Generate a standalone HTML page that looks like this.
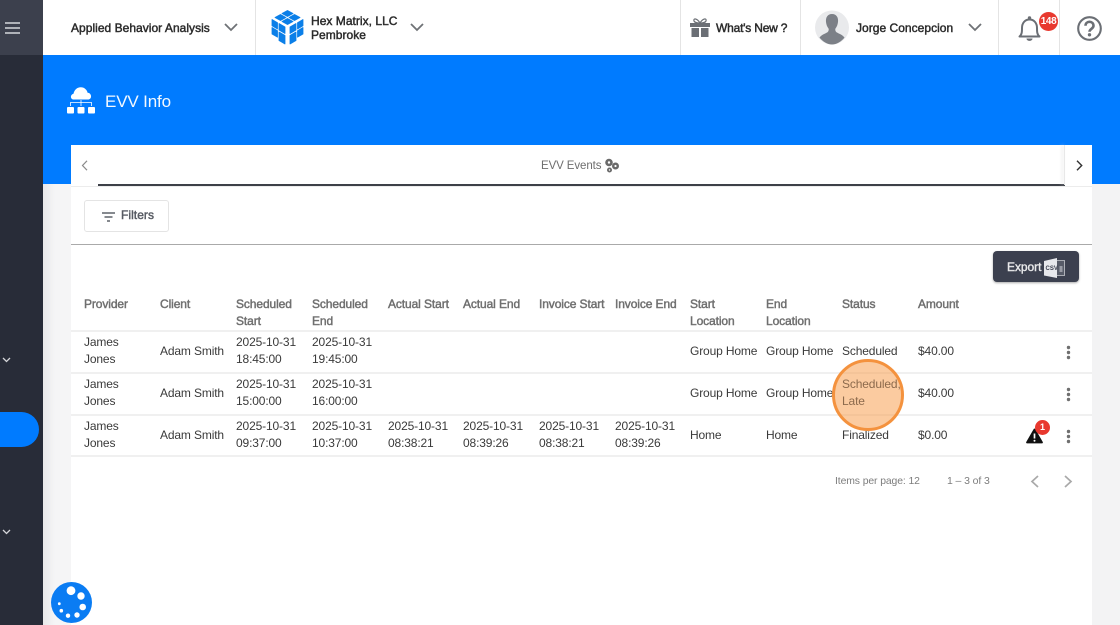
<!DOCTYPE html>
<html><head><meta charset="utf-8"><style>
html,body{margin:0;padding:0}
body{width:1120px;height:625px;overflow:hidden;position:relative;background:#f3f3f4;font-family:"Liberation Sans",sans-serif;color:#333}
.a{position:absolute}
.t{position:absolute;white-space:nowrap;font-size:12px;line-height:17px;letter-spacing:-.14px;color:#3a3a3a}
.h{position:absolute;white-space:nowrap;font-size:12px;line-height:17px;letter-spacing:-.1px;color:#6f6f6f;-webkit-text-stroke:.45px #6f6f6f}
.n{position:absolute;white-space:nowrap;font-size:12px;line-height:15px;letter-spacing:.03px;color:#2b2b2b;-webkit-text-stroke:.45px #2b2b2b}
.l{position:absolute;left:71px;width:1021px;height:2px;background:#f0f0f0}
.v{position:absolute;top:0;width:1px;height:55px;background:#e4e4e4}
svg{position:absolute;overflow:visible}
</style></head><body>

<div class="a" style="left:0;top:0;width:43px;height:625px;background:#282c38"></div>
<div class="a" style="left:0;top:0;width:43px;height:55px;background:#3c404d"></div>
<svg style="left:5px;top:22px" width="15" height="12"><path d="M0 1h15M0 6h15M0 11h15" stroke="#d5d7db" stroke-width="1.4"/></svg>
<svg style="left:2px;top:357px" width="9" height="6"><path d="M1 1l3.5 3.5L8 1" stroke="#d5d6da" stroke-width="1.3" fill="none"/></svg>
<svg style="left:2px;top:529px" width="9" height="6"><path d="M1 1l3.5 3.5L8 1" stroke="#d5d6da" stroke-width="1.3" fill="none"/></svg>
<div class="a" style="left:0;top:412px;width:39px;height:35px;background:#007bff;border-radius:0 18px 18px 0"></div>

<div class="a" style="left:43px;top:0;width:1077px;height:55px;background:#fff"></div>
<div class="a" style="left:43px;top:55px;width:1077px;height:129px;background:#007bff"></div>
<div class="a" style="left:43px;top:184px;width:28px;height:441px;background:linear-gradient(90deg,#e9e9ea,#f5f5f6 12px)"></div>

<div class="n" style="left:71px;top:20.5px">Applied Behavior Analysis</div>
<svg style="left:224px;top:23px" width="14" height="9"><path d="M1 1l6 6 6-6" stroke="#6f7276" stroke-width="1.8" fill="none"/></svg>
<div class="v" style="left:255px"></div>

<svg style="left:271px;top:10px" width="33" height="35" viewBox="0 0 33 35"><g fill="#0b7fe8" stroke="#0b7fe8" stroke-width=".8" stroke-linejoin="round"><path d="M16.5 0.5l5.5 3-5.5 3-5.5-3z"/><path d="M9.5 4.5l5.5 3-5.5 3-5.500-3z"/><path d="M23.500 4.500l5.500 3-5.500 3-5.500-3z"/><path d="M16.500 8.500l5.500 3-5.500 3-5.500-3z"/><path d="M1 9.500l5.500 3.200V19L1 15.800z"/><path d="M8 13.500l6 3.500v6.500l-6-3.500z"/><path d="M32 9.500l-5.500 3.200V19L32 15.800z"/><path d="M25 13.500l-6 3.500v6.500l6-3.500z"/><path d="M1 17.500l5.500 3.200v6.500L1 24z"/><path d="M8 22l6 3.500V34l-6-3.500z"/><path d="M32 17.500l-5.500 3.200v6.500L32 24z"/><path d="M25 22l-6 3.500V34l6-3.500z"/></g></svg>
<div class="n" style="left:311px;top:13.500px;line-height:14.500px">Hex Matrix, LLC<br>Pembroke</div>
<svg style="left:410px;top:23px" width="14" height="9"><path d="M1 1l6 6 6-6" stroke="#6f7276" stroke-width="1.8" fill="none"/></svg>

<div class="v" style="left:680px"></div>
<svg style="left:690px;top:18px" width="20" height="20" viewBox="0 0 20 20"><path d="M0 5h20v4H0zM1.500 10h7.500v9H1.500zM11 10h7.500v9H11z" fill="#6b6f75"/><path d="M10 5C7 0 3 0 4 3c.5 1.500 4 2 6 2zm0 0c3-5 7-5 6-2-.5 1.500-4 2-6 2z" fill="none" stroke="#6b6f75" stroke-width="1.200"/></svg>
<div class="n" style="left:716px;top:20.500px;letter-spacing:-.2px">What's New ?</div>
<div class="v" style="left:800px"></div>
<svg style="left:815px;top:10px" width="34" height="35" viewBox="0 0 34 35"><circle cx="17" cy="17.500" r="17" fill="#e9eaec"/><path d="M17 4c4.500 0 6.500 3.500 6 8-.3 2.500-1 4.500-2.500 6.500-.6 1 0 3 1 3.700 2.500 1.500 6 2.500 8 5.300-3 4-8 7-12.500 7S7.500 31.500 4.500 27.500c2-2.800 5.500-3.800 8-5.300 1-.7 1.600-2.700 1-3.700C12 16.500 11.300 14.500 11 12c-.5-4.500 1.500-8 6-8z" fill="#7c8087"/></svg>
<div class="n" style="left:856px;top:20.500px">Jorge Concepcion</div>
<svg style="left:968px;top:23px" width="14" height="9"><path d="M1 1l6 6 6-6" stroke="#6f7276" stroke-width="1.8" fill="none"/></svg>
<div class="v" style="left:998px"></div>
<svg style="left:1018px;top:16px" width="23" height="26" viewBox="0 0 23 26"><path d="M1.500 20.500c2.500-2 2.500-5 2.500-8.500 0-5 3-8.500 7.500-8.500S19 7 19 12c0 3.500 0 6.500 2.500 8.500z" fill="none" stroke="#6b6f75" stroke-width="2" stroke-linejoin="round"/><path d="M8.500 22.500h6c0 3.200-6 3.200-6 0z" fill="#6b6f75"/><circle cx="11.500" cy="2" r="1.700" fill="#6b6f75"/></svg>
<div class="a" style="left:1039px;top:12px;width:19px;height:19px;border-radius:50%;background:#e8392f;color:#fff;font-size:10px;font-weight:bold;line-height:19px;text-align:center;letter-spacing:-.4px">148</div>
<div class="v" style="left:1059px"></div>
<svg style="left:1077px;top:16px" width="25" height="25" viewBox="0 0 25 25"><circle cx="12.500" cy="12.500" r="11.300" fill="none" stroke="#6b6f75" stroke-width="2.100"/><path d="M8.500 9.800c0-5.300 8-5.300 8 0 0 3-4 3-4 6" fill="none" stroke="#6b6f75" stroke-width="2.600"/><circle cx="12.500" cy="18.800" r="1.700" fill="#6b6f75"/></svg>

<svg style="left:67px;top:87px" width="28" height="27" viewBox="0 0 28 27"><g fill="#fff"><path d="M7 12.500c-4 0-4-5-.5-5.800C7.300 3 10 .3 13.800 .3c3.500 0 6 2.400 6.800 5.400 4.200 0 5 6.800.2 6.800z"/><rect x="0" y="20" width="7" height="6.500" rx="1"/><rect x="10.500" y="20" width="7" height="6.500" rx="1"/><rect x="21" y="20" width="7" height="6.500" rx="1"/></g><path d="M3.500 19v-3.500h21V19M14 13v6" fill="none" stroke="#fff" stroke-width=".8"/></svg>
<div class="a" style="left:105px;top:91px;font-size:17px;line-height:21px;color:#f2f8ff;white-space:nowrap;letter-spacing:-.15px">EVV Info</div>

<div class="a" style="left:71px;top:145px;width:1021px;height:480px;background:#fff"></div>
<div class="a" style="left:98px;top:184px;width:967px;height:2px;background:#3d4048"></div>
<div class="a" style="left:71px;top:186px;width:1021px;height:1px;background:#ececec"></div>
<div class="a" style="left:1064px;top:145px;width:1px;height:40px;background:#e8e8e8;box-shadow:-2px 0 3px #ddd"></div>
<svg style="left:81px;top:160px" width="7" height="11"><path d="M6 .8L1.500 5.500 6 10.200" stroke="#8a8a8a" stroke-width="1.200" fill="none"/></svg>
<svg style="left:1076px;top:160px" width="7" height="11"><path d="M1 .8l4.700 4.700L1 10.200" stroke="#333" stroke-width="1.400" fill="none"/></svg>
<div class="a" style="left:541px;top:158px;font-size:11.500px;line-height:17px;color:#6e6e6e;white-space:nowrap;letter-spacing:-.1px">EVV Events</div>
<svg style="left:604px;top:158px" width="16" height="15" viewBox="0 0 16 15"><g fill="none" stroke="#6a6a6a"><circle cx="5" cy="4.500" r="2.500" stroke-width="2.600"/><circle cx="11.500" cy="8" r="2.300" stroke-width="2.400"/><circle cx="5.500" cy="12" r="1.600" stroke-width="1.800"/></g></svg>

<div class="a" style="left:84px;top:200px;width:83px;height:30px;border:1px solid #e4e4e4;border-radius:3px"></div>
<svg style="left:102px;top:212px" width="13" height="10"><path d="M0 1h13M2.500 5h8M5 9h3" stroke="#3f434c" stroke-width="1.300"/></svg>
<div class="a" style="left:121px;top:207px;font-size:12px;line-height:16px;color:#575b63;-webkit-text-stroke:.45px #575b63;white-space:nowrap;letter-spacing:.05px">Filters</div>
<div class="a" style="left:71px;top:244px;width:1021px;height:1px;background:#aaa"></div>

<div class="a" style="left:993px;top:251px;width:86px;height:31px;background:#3c404f;border-radius:4px;box-shadow:0 1px 2px #aaa"></div>
<div class="a" style="left:1007px;top:259px;font-size:12px;line-height:16px;color:#e8e8ea;-webkit-text-stroke:.4px #e8e8ea;white-space:nowrap;letter-spacing:-.05px">Export</div>
<svg style="left:1044px;top:258px" width="21" height="20" viewBox="0 0 21 20"><path d="M12 2.500h8.500v15H12z" fill="#575b68" stroke="#c9cad0" stroke-width=".8"/><path d="M0 3l13-3v20L0 17.500z" fill="#e7e8ec"/><text x="1.500" y="12" font-family="Liberation Sans" font-size="6" font-weight="bold" fill="#3c404f">CSV</text><path d="M15.500 8h3v6h-3z" fill="#9a9ca6"/></svg>

<div class="h" style="left:84px;top:295.500px">Provider</div>
<div class="h" style="left:160px;top:295.500px">Client</div>
<div class="h" style="left:236px;top:295.500px">Scheduled<br>Start</div>
<div class="h" style="left:312px;top:295.500px">Scheduled<br>End</div>
<div class="h" style="left:388px;top:295.500px">Actual Start</div>
<div class="h" style="left:463px;top:295.500px">Actual End</div>
<div class="h" style="left:539px;top:295.500px">Invoice Start</div>
<div class="h" style="left:615px;top:295.500px">Invoice End</div>
<div class="h" style="left:690px;top:295.500px">Start<br>Location</div>
<div class="h" style="left:766px;top:295.500px">End<br>Location</div>
<div class="h" style="left:842px;top:295.500px">Status</div>
<div class="h" style="left:918px;top:295.500px">Amount</div>

<div class="l" style="top:330px"></div>
<div class="l" style="top:372px"></div>
<div class="l" style="top:414px"></div>
<div class="l" style="top:455px"></div>

<div class="t" style="left:84px;top:334px">James<br>Jones</div>
<div class="t" style="left:160px;top:343px">Adam Smith</div>
<div class="t" style="left:236px;top:334px">2025-10-31<br>18:45:00</div>
<div class="t" style="left:312px;top:334px">2025-10-31<br>19:45:00</div>
<div class="t" style="left:690px;top:343px">Group Home</div>
<div class="t" style="left:766px;top:343px">Group Home</div>
<div class="t" style="left:842px;top:343px">Scheduled</div>
<div class="t" style="left:918px;top:343px">$40.00</div>

<div class="t" style="left:84px;top:376px">James<br>Jones</div>
<div class="t" style="left:160px;top:385px">Adam Smith</div>
<div class="t" style="left:236px;top:376px">2025-10-31<br>15:00:00</div>
<div class="t" style="left:312px;top:376px">2025-10-31<br>16:00:00</div>
<div class="t" style="left:690px;top:385px">Group Home</div>
<div class="t" style="left:766px;top:385px">Group Home</div>
<div class="t" style="left:918px;top:385px">$40.00</div>

<div class="t" style="left:84px;top:418px">James<br>Jones</div>
<div class="t" style="left:160px;top:427px">Adam Smith</div>
<div class="t" style="left:236px;top:418px">2025-10-31<br>09:37:00</div>
<div class="t" style="left:312px;top:418px">2025-10-31<br>10:37:00</div>
<div class="t" style="left:388px;top:418px">2025-10-31<br>08:38:21</div>
<div class="t" style="left:463px;top:418px">2025-10-31<br>08:39:26</div>
<div class="t" style="left:539px;top:418px">2025-10-31<br>08:38:21</div>
<div class="t" style="left:615px;top:418px">2025-10-31<br>08:39:26</div>
<div class="t" style="left:690px;top:427px">Home</div>
<div class="t" style="left:766px;top:427px">Home</div>
<div class="t" style="left:842px;top:427px">Finalized</div>
<div class="t" style="left:918px;top:427px">$0.00</div>

<svg style="left:1066px;top:345px" width="5" height="15"><g fill="#6f6f6f"><circle cx="2.500" cy="2.500" r="1.700"/><circle cx="2.500" cy="7.500" r="1.700"/><circle cx="2.500" cy="12.500" r="1.700"/></g></svg>
<svg style="left:1066px;top:387px" width="5" height="15"><g fill="#6f6f6f"><circle cx="2.500" cy="2.500" r="1.700"/><circle cx="2.500" cy="7.500" r="1.700"/><circle cx="2.500" cy="12.500" r="1.700"/></g></svg>
<svg style="left:1066px;top:429px" width="5" height="15"><g fill="#6f6f6f"><circle cx="2.500" cy="2.500" r="1.700"/><circle cx="2.500" cy="7.500" r="1.700"/><circle cx="2.500" cy="12.500" r="1.700"/></g></svg>

<svg style="left:1026px;top:428px" width="17" height="16" viewBox="0 0 17 16"><path d="M8.500 1.500L16 14.500H1z" fill="#111" stroke="#111" stroke-width="1.800" stroke-linejoin="round"/><path d="M8.500 5.500v5" stroke="#fff" stroke-width="1.700"/><circle cx="8.500" cy="12.800" r="1" fill="#fff"/></svg>
<div class="a" style="left:1035px;top:420px;width:15px;height:15px;border-radius:50%;background:#e8392f;color:#fff;font-size:9px;font-weight:bold;line-height:15px;text-align:center">1</div>

<div class="a" style="left:835px;top:473.500px;font-size:10.400px;line-height:15px;color:#7d7d7d;white-space:nowrap;letter-spacing:-.1px">Items per page: 12</div>
<div class="a" style="left:947px;top:473.500px;font-size:10.500px;line-height:15px;color:#7d7d7d;white-space:nowrap;letter-spacing:-.1px">1 – 3 of 3</div>
<svg style="left:1030px;top:475px" width="9" height="13"><path d="M8 1L2 6.500 8 12" stroke="#a9a9a9" stroke-width="1.700" fill="none"/></svg>
<svg style="left:1064px;top:475px" width="9" height="13"><path d="M1 1l6 5.500L1 12" stroke="#a9a9a9" stroke-width="1.700" fill="none"/></svg>

<div class="a" style="left:832px;top:359px;width:72px;height:72px;box-sizing:border-box;border-radius:50%;background:rgba(248,151,66,.5);border:3px solid #f4923e"></div>
<div class="t" style="left:842px;top:376px;color:#8c6a4c">Scheduled,<br>Late</div>

<svg style="left:51px;top:582px" width="41" height="41" viewBox="0 0 41 41"><circle cx="20.500" cy="20.500" r="20.500" fill="#0a7cf3"/><g fill="#fff"><circle cx="20" cy="8.700" r="4.400"/><circle cx="30" cy="14" r="3.700"/><circle cx="31.700" cy="25" r="3.300"/><circle cx="26" cy="33" r="2.700"/><circle cx="17" cy="33.700" r="2.200"/><circle cx="10.300" cy="28.700" r="1.800"/><circle cx="8.300" cy="21.700" r="1.400"/></g></svg>
</body></html>
